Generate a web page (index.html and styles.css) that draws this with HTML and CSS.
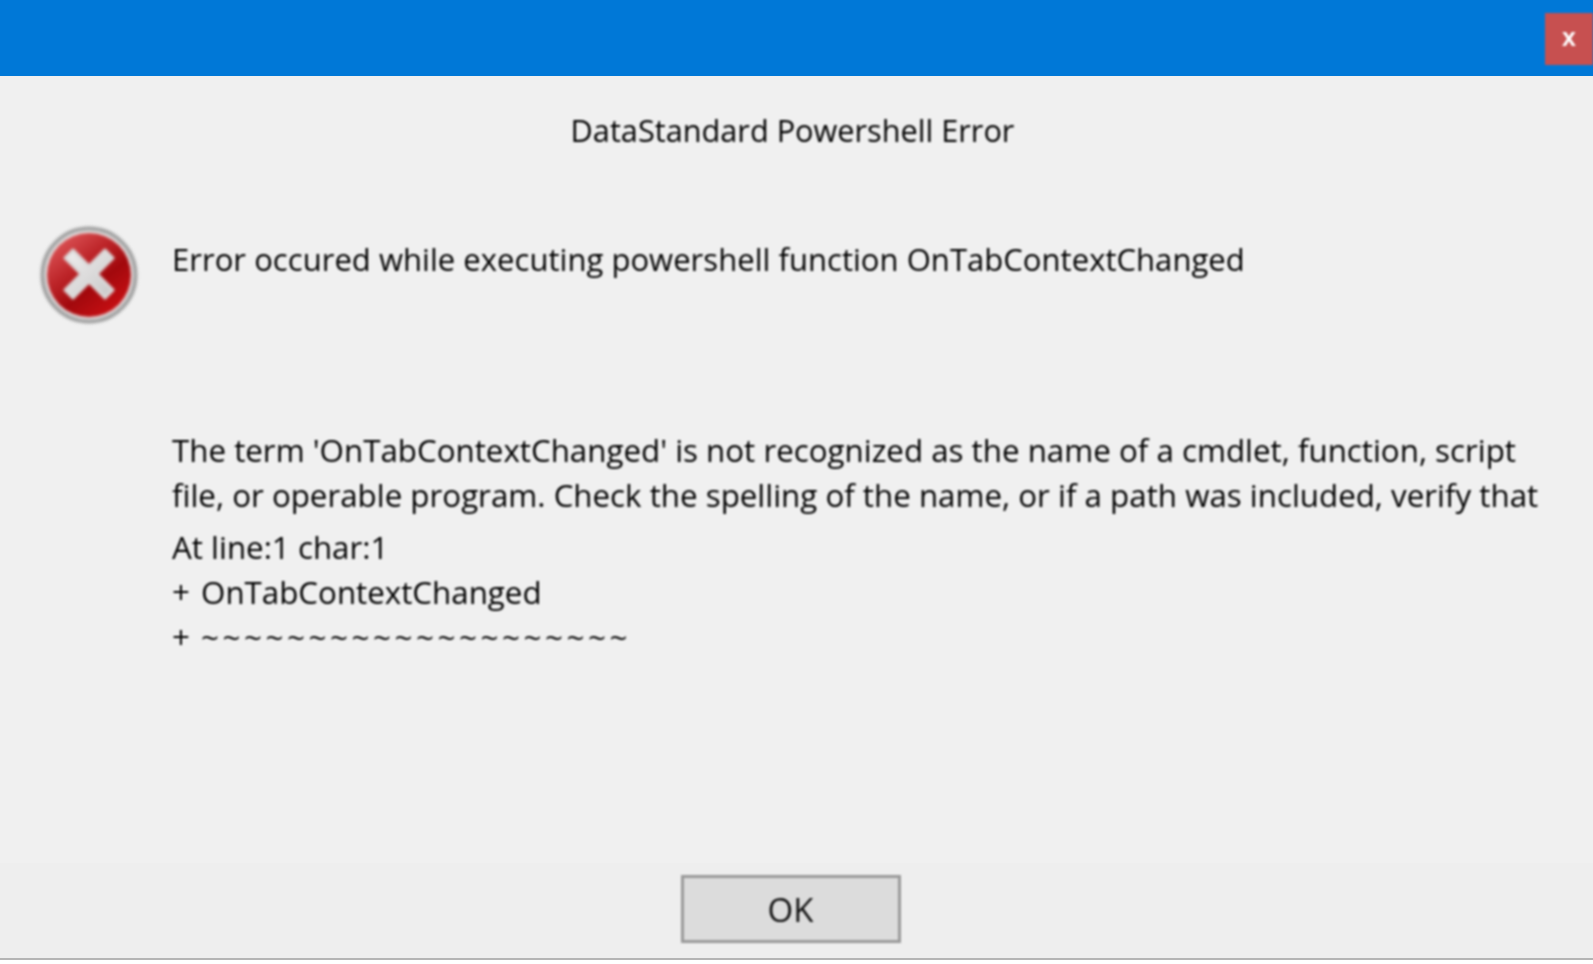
FILE: index.html
```html
<!DOCTYPE html>
<html lang="en">
<head>
    <meta charset="UTF-8">
    <meta name="viewport" content="width=device-width, initial-scale=1.0">
    <title>DataStandard Powershell Error</title>
    <link rel="stylesheet" href="styles.css">
</head>
<body>
    <div class="dialog">
        <div class="title-bar">
            <button class="close-button">x</button>
        </div>
        <div class="content">
            <div class="caption">DataStandard Powershell Error</div>
            <div class="message-row">
                <svg class="error-icon" width="100" height="100" viewBox="0 0 100 100">
                    <defs>
                        <linearGradient id="redFill" x1="0.15" y1="0.05" x2="0.85" y2="0.95">
                            <stop offset="0" stop-color="#dd5558"/>
                            <stop offset="0.35" stop-color="#bd2529"/>
                            <stop offset="0.62" stop-color="#a2090d"/>
                            <stop offset="1" stop-color="#cc1014"/>
                        </linearGradient>
                        <linearGradient id="crossFill" x1="0" y1="0" x2="1" y2="1">
                            <stop offset="0" stop-color="#f0eeee"/>
                            <stop offset="1" stop-color="#c8c8c8"/>
                        </linearGradient>
                    </defs>
                    <circle cx="49" cy="50" r="46.5" fill="#e4e4e4" stroke="#a0a0a0" stroke-width="4"/>
                    <circle cx="49" cy="50" r="42" fill="url(#redFill)"/>
                    <path d="M25 33 L33 25 L49 41 L65 25 L73 33 L57 49 L73 65 L65 73 L49 57 L33 73 L25 65 L41 49 Z" fill="url(#crossFill)" stroke="#dcdcdc" stroke-width="3" stroke-linejoin="round"/>
                </svg>
                <div class="message">Error occured while executing powershell function OnTabContextChanged</div>
            </div>
            <div class="details">
                <p class="detail-text">The term 'OnTabContextChanged' is not recognized as the name of a cmdlet, function, script<br>file, or operable program. Check the spelling of the name, or if a path was included, verify that</p>
                <p class="detail-text">At line:1 char:1<br><span class="plus">+</span> OnTabContextChanged<br><span class="plus">+</span> <span class="tildes">~~~~~~~~~~~~~~~~~~~~</span></p>
            </div>
        </div>
        <div class="footer">
            <button class="ok-button">OK</button>
        </div>
    </div>
</body>
</html>
```

FILE: styles.css
```css
html, body {
    margin: 0;
    height: 100%;
    background-color: #ffffff;
    overflow: hidden;
}
.dialog {
    display: flex;
    flex-direction: column;
    height: 958px;
    background-color: #f0f0f0;
    border-bottom: 2px solid #b4b4b4;
    font-family: "Open Sans", "Noto Sans", sans-serif;
    color: #000000;
}
.title-bar {
    display: flex;
    justify-content: flex-end;
    height: 63px;
    padding-top: 13px;
    background-color: #0078d7;
}
.close-button {
    width: 48px;
    height: 52px;
    padding: 0 0 4px;
    border: none;
    background-color: #c75050;
    color: #ffffff;
    font-family: "Liberation Sans", sans-serif;
    font-size: 25px;
    font-weight: bold;
    filter: blur(0.8px);
}
.content {
    flex: 1;
    padding-top: 32px;
    filter: blur(0.8px);
}
.caption {
    padding-right: 8px;
    text-align: center;
    font-size: 30.7px;
    line-height: 44px;
}
.message-row {
    display: flex;
    gap: 32px;
    margin-top: 73px;
    padding-left: 40px;
}
.error-icon {
    flex: none;
    filter: blur(1px);
}
.message {
    font-size: 31px;
    letter-spacing: 0.04px;
    line-height: 44px;
    margin-top: 12px;
}
.details {
    margin-top: 103px;
    padding-left: 172px;
}
.detail-text {
    margin: 0 0 7px;
    font-size: 31.3px;
    line-height: 45px;
    white-space: nowrap;
}
.plus {
    margin-right: 3px;
}
.tildes {
    letter-spacing: 3.6px;
}
.footer {
    display: flex;
    justify-content: center;
    height: 95px;
    padding: 12px 12px 0 0;
    box-sizing: border-box;
    background-color: #eeeeee;
}
.ok-button {
    width: 220px;
    height: 68px;
    border: 3px solid #9a9a9a;
    background-color: #dcdcdc;
    color: #111111;
    font-family: "Open Sans", sans-serif;
    font-size: 33px;
    filter: blur(0.8px);
}
```
